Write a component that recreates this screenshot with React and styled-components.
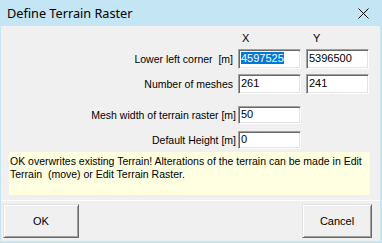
import React from 'react';
import styled, { createGlobalStyle } from 'styled-components';

const GlobalStyle = createGlobalStyle`
  html, body {
    margin: 0;
    padding: 0;
    background: #c4e5f3;
  }
  body {
    font-family: "Liberation Sans", Arial, sans-serif;
    color: #000;
  }
`;

const Window = styled.div`
  width: 382px;
  height: 243px;
  box-sizing: border-box;
  padding: 0 2px 2px 1px;
  background: #c4e5f3;
  display: flex;
  flex-direction: column;
`;

const TitleBar = styled.div`
  height: 26px;
  flex: none;
  display: flex;
  align-items: center;
  justify-content: space-between;
  padding: 0 11px 0 6px;
  font-family: "Noto Sans", "Open Sans", sans-serif;
  font-size: 12.7px;
`;

const Body = styled.div`
  flex: 1;
  background: #f0f0f0;
  display: flex;
  flex-direction: column;
  font-size: 11px;
`;

const CoordGrid = styled.div`
  display: grid;
  grid-template-columns: 232px 63px 63px;
  grid-template-rows: 12px 20px 20px;
  column-gap: 5px;
  row-gap: 5px;
  padding-top: 6px;
  align-items: center;
`;

const ValueGrid = styled.div`
  display: grid;
  grid-template-columns: 235px 63px;
  grid-template-rows: 18px 18px;
  column-gap: 2px;
  row-gap: 7px;
  margin-top: 12px;
  align-items: center;
`;

const Label = styled.div`
  text-align: right;
  white-space: pre;
  font-size: 10.5px;
`;

const AxisHead = styled.div`
  padding-left: ${p => p.$offset}px;
  font-size: 11px;
`;

const Field = styled.div`
  box-sizing: border-box;
  height: 100%;
  background: #fff;
  border-top: 1px solid #a0a0a0;
  border-left: 1px solid #a0a0a0;
  border-bottom: 1px solid #fff;
  border-right: 1px solid #fff;
  box-shadow: inset 1px 1px 0 #696969, inset -1px -1px 0 #e3e3e3;
  padding: ${p => (p.$tall ? '2px' : '1px')} 2px 0 2px;
  font-size: 11px;
  line-height: 13px;
  white-space: nowrap;
`;

const Selected = styled.span`
  background: #0078d7;
  color: #fff;
`;

const Note = styled.div`
  margin: 3px 10px 0 8px;
  height: 43px;
  box-sizing: border-box;
  background: #ffffe1;
  padding: 3px 2px 0 1px;
  font-size: 10.5px;
  line-height: 13px;
  white-space: pre-wrap;
`;

const ButtonBar = styled.div`
  margin-top: 5px;
  border-top: 1px solid #fff;
  padding: 3px 8px 0 2px;
  display: flex;
  justify-content: space-between;
`;

const Button = styled.div`
  box-sizing: border-box;
  width: ${p => p.$width}px;
  height: 34px;
  display: flex;
  align-items: center;
  justify-content: center;
  background: #f0f0f0;
  border-top: 1px solid #e3e3e3;
  border-left: 1px solid #e3e3e3;
  border-bottom: 1px solid #696969;
  border-right: 1px solid #696969;
  box-shadow: inset 1px 1px 0 #fff, inset -1px -1px 0 #a0a0a0;
  font-size: 11px;
`;

const CloseIcon = () => (
  <svg width="11" height="11" viewBox="0 0 11 11">
    <path d="M0.5 0.5 L10.5 10.5 M10.5 0.5 L0.5 10.5" stroke="#000" strokeWidth="1" fill="none" />
  </svg>
);

export default function App() {
  return (
    <>
      <GlobalStyle />
      <Window>
        <TitleBar>
          <span>Define Terrain Raster</span>
          <CloseIcon />
        </TitleBar>
        <Body>
          <CoordGrid>
            <div />
            <AxisHead $offset={4}>X</AxisHead>
            <AxisHead $offset={7}>Y</AxisHead>
            <Label>{'Lower left corner  [m]'}</Label>
            <Field $tall><Selected>4597525</Selected></Field>
            <Field $tall>5396500</Field>
            <Label>Number of meshes</Label>
            <Field $tall>261</Field>
            <Field $tall>241</Field>
          </CoordGrid>
          <ValueGrid>
            <Label>Mesh width of terrain raster [m]</Label>
            <Field>50</Field>
            <Label>Default Height [m]</Label>
            <Field>0</Field>
          </ValueGrid>
          <Note>
            {'OK overwrites existing Terrain! Alterations of the terrain can be made in Edit Terrain  (move) or Edit Terrain Raster.'}
          </Note>
          <ButtonBar>
            <Button $width={76}>OK</Button>
            <Button $width={70}>Cancel</Button>
          </ButtonBar>
        </Body>
      </Window>
    </>
  );
}
